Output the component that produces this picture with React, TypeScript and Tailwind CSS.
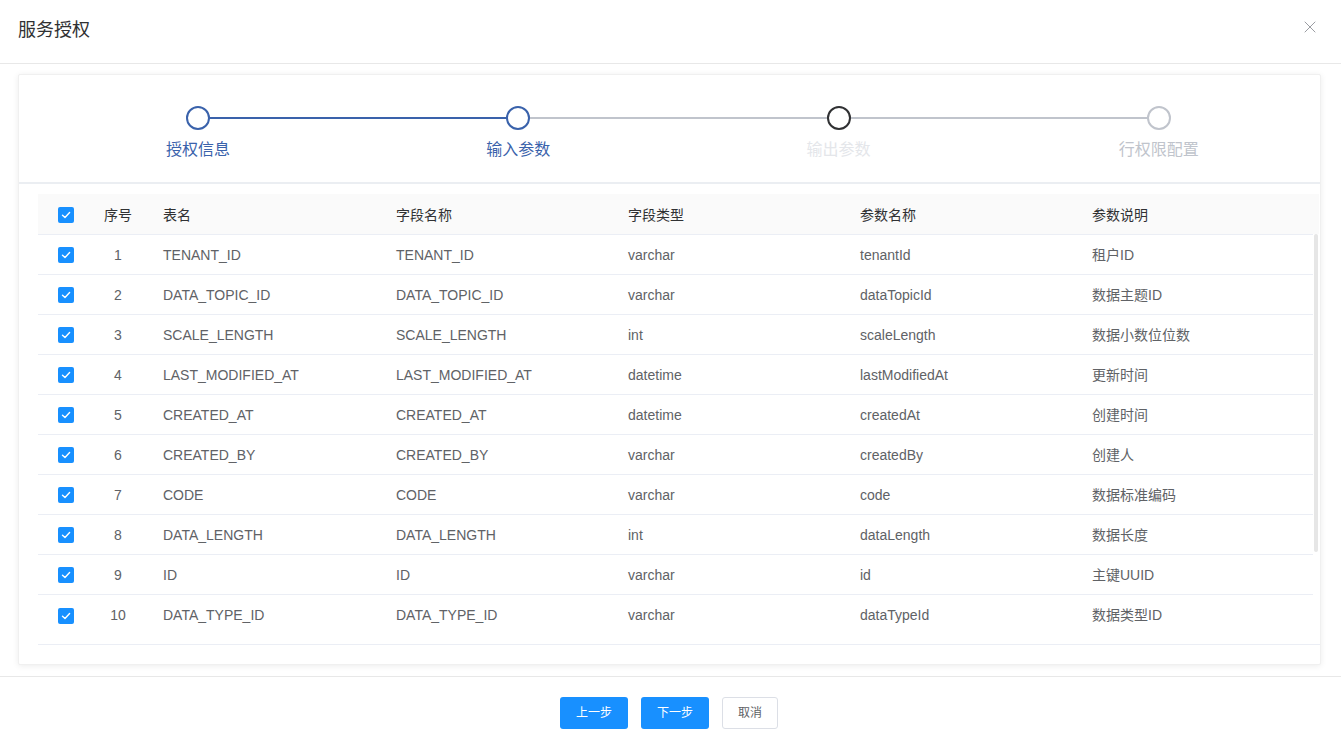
import { X } from "lucide-react";

const rows = [
  ["TENANT_ID", "varchar", "tenantId", "租户ID"],
  ["DATA_TOPIC_ID", "varchar", "dataTopicId", "数据主题ID"],
  ["SCALE_LENGTH", "int", "scaleLength", "数据小数位位数"],
  ["LAST_MODIFIED_AT", "datetime", "lastModifiedAt", "更新时间"],
  ["CREATED_AT", "datetime", "createdAt", "创建时间"],
  ["CREATED_BY", "varchar", "createdBy", "创建人"],
  ["CODE", "varchar", "code", "数据标准编码"],
  ["DATA_LENGTH", "int", "dataLength", "数据长度"],
  ["ID", "varchar", "id", "主键UUID"],
  ["DATA_TYPE_ID", "varchar", "dataTypeId", "数据类型ID"],
];

const steps = [
  { label: "授权信息", circle: "border-[#3a62ab]", text: "text-[#3a62ab]" },
  { label: "输入参数", circle: "border-[#3a62ab]", text: "text-[#3a62ab]" },
  { label: "输出参数", circle: "border-[#303133]", text: "text-[#e4e6ea]" },
  { label: "行权限配置", circle: "border-[#c0c4cc]", text: "text-[#c0c4cc]" },
];

function Checkbox() {
  return (
    <span className="flex h-[16px] w-[16px] items-center justify-center rounded-[2px] bg-[#1890ff]">
      <svg width="10" height="8" viewBox="0 0 10 8" fill="none">
        <path d="M1.5 4.2 L4 6.5 L8.6 1.6" stroke="white" strokeWidth="1.4" strokeLinecap="round" strokeLinejoin="round" />
      </svg>
    </span>
  );
}

const grid = "grid grid-cols-[54px_52px_233px_233px_232px_232px_1fr] items-center";

export default function App() {
  return (
    <div
      className="flex h-[747px] w-[1341px] flex-col bg-white text-[14px] text-[#606266]"
      style={{ fontFamily: '"Liberation Sans", "Noto Sans CJK SC", sans-serif' }}
    >
      {/* Header */}
      <div className="flex h-[64px] shrink-0 items-center justify-between border-b border-[#e8e8e8] pl-[18px] pr-[21px]">
        <h1 className="text-[18px] text-[#303133] -mt-[2px]">服务授权</h1>
        <X size={20} strokeWidth={1.1} className="text-[#909399] -mt-[10px]" />
      </div>

      {/* Body */}
      <div className="px-[18px] pb-[11px] pt-[10px] pr-[20px]">
        <div className="flex h-[591px] flex-col rounded-[2px] border border-[#f0f0f0] bg-white shadow-[0_1px_6px_rgba(0,0,0,0.08)]">
          {/* Steps */}
          <div className="grid h-[109px] shrink-0 grid-cols-4 border-b-2 border-[#ebeef2] pl-[19px] pr-[1px] pt-[31px]">
            {steps.map((s, i) => (
              <div key={s.label} className="flex flex-col items-center">
                <div className="relative flex h-[24px] w-full items-center justify-center">
                  {i > 0 && (
                    <div
                      className={`absolute left-0 right-1/2 top-[11px] h-[2px] ${i <= 1 ? "bg-[#3a62ab]" : "bg-[#c0c4cc]"}`}
                    />
                  )}
                  {i < 3 && (
                    <div
                      className={`absolute left-1/2 right-0 top-[11px] h-[2px] ${i < 1 ? "bg-[#3a62ab]" : "bg-[#c0c4cc]"}`}
                    />
                  )}
                  <div className={`relative h-[24px] w-[24px] rounded-full border-2 bg-white ${s.circle}`} />
                </div>
                <span className={`mt-[8px] text-[16px] ${s.text}`}>{s.label}</span>
              </div>
            ))}
          </div>

          {/* Table */}
          <div className="pl-[19px] pt-[10px]">
            <div className={`${grid} h-[40px] bg-[#fafafa] pt-[2px] text-[#303133] mr-[1px]`}>
              <div className="flex justify-center pl-[1px]">
                <Checkbox />
              </div>
              <div className="text-center">序号</div>
              <div className="pl-[19px]">表名</div>
              <div className="pl-[19px]">字段名称</div>
              <div className="pl-[18px]">字段类型</div>
              <div className="pl-[18px]">参数名称</div>
              <div className="pl-[18px]">参数说明</div>
            </div>
            <div className="flex border-b border-[#ebeef5]">
              <div className="flex-1 border-t border-[#ebeef5]">
                {rows.map((r, i) => (
                  <div
                    key={r[0]}
                    className={`${grid} ${i < rows.length - 1 ? "h-[40px] border-b border-[#ebeef5] pt-[1px]" : "h-[49px] pb-[8px]"}`}
                  >
                    <div className="flex justify-center pl-[1px]">
                      <Checkbox />
                    </div>
                    <div className="text-center">{i + 1}</div>
                    <div className="pl-[19px]">{r[0]}</div>
                    <div className="pl-[19px]">{r[0]}</div>
                    <div className="pl-[18px]">{r[1]}</div>
                    <div className="pl-[18px]">{r[2]}</div>
                    <div className="pl-[18px]">{r[3]}</div>
                  </div>
                ))}
              </div>
              <div className="w-[7px] pl-[1px] pr-[2px]">
                <div className="h-[318px] rounded-[2px] bg-[#e6e6e6]" />
              </div>
            </div>
          </div>
        </div>
      </div>

      {/* Footer */}
      <div className="flex flex-1 items-start justify-center gap-[13px] border-t border-[#e8e8e8] pr-[3px] pt-[20px]">
        <button className="h-[32px] w-[68px] rounded-[3px] bg-[#1890ff] text-[12px] text-white">上一步</button>
        <button className="h-[32px] w-[68px] rounded-[3px] bg-[#1890ff] text-[12px] text-white">下一步</button>
        <button className="h-[32px] w-[56px] rounded-[3px] border border-[#dcdfe6] bg-white text-[12px] text-[#606266]">
          取消
        </button>
      </div>
    </div>
  );
}
